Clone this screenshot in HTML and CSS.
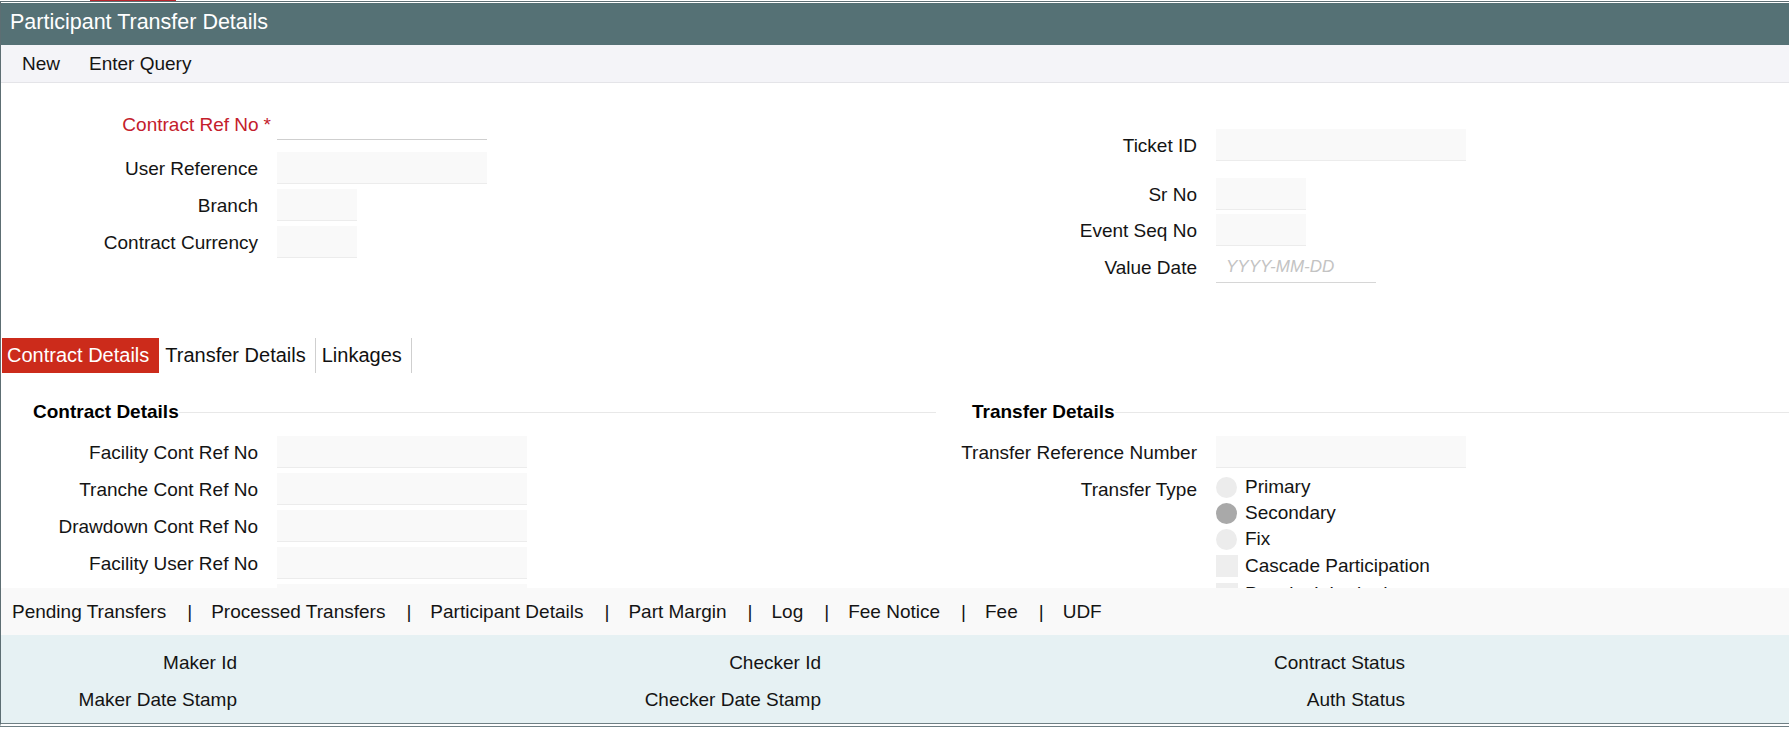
FILE: index.html
```html
<!DOCTYPE html>
<html lang="en">
<head>
<meta charset="utf-8">
<title>Participant Transfer Details</title>
<link rel="stylesheet" href="styles.css">
</head>
<body>
<div class="topmark"><span class="topmark-bar"></span></div>
<div class="window">
  <div class="titlebar">Participant Transfer Details</div>
  <div class="toolbar">
    <span class="tool">New</span>
    <span class="tool">Enter Query</span>
  </div>

  <div class="form-top">
    <div class="col col-left">
      <div class="row"><label class="lbl lbl-req">Contract Ref No<span class="star">*</span></label><span class="inp inp-line w210"></span></div>
      <div class="row mt12"><label class="lbl">User Reference</label><span class="inp w210"></span></div>
      <div class="row mt5"><label class="lbl">Branch</label><span class="inp w80"></span></div>
      <div class="row mt5"><label class="lbl">Contract Currency</label><span class="inp w80"></span></div>
    </div>
    <div class="col col-right">
      <div class="row"><label class="lbl">Ticket ID</label><span class="inp w250"></span></div>
      <div class="row mt17"><label class="lbl">Sr No</label><span class="inp w90"></span></div>
      <div class="row mt4"><label class="lbl">Event Seq No</label><span class="inp w90"></span></div>
      <div class="row mt5"><label class="lbl">Value Date</label><span class="inp inp-date w160">YYYY-MM-DD</span></div>
    </div>
  </div>

  <div class="tabs">
    <span class="tab tab-active">Contract Details</span>
    <span class="tab">Transfer Details</span>
    <span class="tab">Linkages</span>
  </div>

  <div class="tab-body">
    <div class="fs fs-left">
      <div class="legend"><span class="legend-text">Contract Details</span></div>
      <div class="row mt5"><label class="lbl">Facility Cont Ref No</label><span class="inp w250"></span></div>
      <div class="row mt5"><label class="lbl">Tranche Cont Ref No</label><span class="inp w250"></span></div>
      <div class="row mt5"><label class="lbl">Drawdown Cont Ref No</label><span class="inp w250"></span></div>
      <div class="row mt5"><label class="lbl">Facility User Ref No</label><span class="inp w250"></span></div>
      <div class="row mt5"><span class="lbl"></span><span class="inp w250"></span></div>
    </div>
    <div class="fs fs-right">
      <div class="legend"><span class="legend-text">Transfer Details</span></div>
      <div class="row mt5"><label class="lbl">Transfer Reference Number</label><span class="inp w250"></span></div>
      <div class="row row-top mt5">
        <label class="lbl lbl-tall">Transfer Type</label>
        <div class="options">
          <div class="opt"><span class="radio"></span>Primary</div>
          <div class="opt"><span class="radio radio-on"></span>Secondary</div>
          <div class="opt"><span class="radio"></span>Fix</div>
          <div class="chk-opt"><span class="check"></span>Cascade Participation</div>
          <div class="chk-opt"><span class="check"></span>Penalty Inherited</div>
        </div>
      </div>
    </div>
  </div>

  <div class="navbar">
    <span class="nav-item">Pending Transfers</span><span class="nav-sep">|</span>
    <span class="nav-item">Processed Transfers</span><span class="nav-sep">|</span>
    <span class="nav-item">Participant Details</span><span class="nav-sep">|</span>
    <span class="nav-item">Part Margin</span><span class="nav-sep">|</span>
    <span class="nav-item">Log</span><span class="nav-sep">|</span>
    <span class="nav-item">Fee Notice</span><span class="nav-sep">|</span>
    <span class="nav-item">Fee</span><span class="nav-sep">|</span>
    <span class="nav-item">UDF</span>
  </div>

  <div class="audit">
    <div class="audit-cell"><span class="audit-lbl">Maker Id</span></div>
    <div class="audit-cell"><span class="audit-lbl">Checker Id</span></div>
    <div class="audit-cell"><span class="audit-lbl">Contract Status</span></div>
    <div class="audit-cell"><span class="audit-lbl">Maker Date Stamp</span></div>
    <div class="audit-cell"><span class="audit-lbl">Checker Date Stamp</span></div>
    <div class="audit-cell"><span class="audit-lbl">Auth Status</span></div>
  </div>
</div>
</body>
</html>
```

FILE: styles.css
```css
html, body {
  margin: 0;
  padding: 0;
  background: #ffffff;
}

body {
  width: 1789px;
  height: 729px;
  overflow: hidden;
  font-family: "Liberation Sans", Arial, sans-serif;
  font-size: 19px;
  color: #141414;
}

.topmark {
  height: 1px;
}

.topmark-bar {
  display: block;
  margin-left: 90px;
  width: 86px;
  height: 1px;
  background: #b8262c;
}

.window {
  border-top: 1px solid #5d6e73;
  border-left: 1px solid #5d6e73;
  border-bottom: 4px double #6f7f84;
  padding-top: 1px;
}

.titlebar {
  height: 42px;
  box-sizing: border-box;
  padding: 0 0 4px 9px;
  display: flex;
  align-items: center;
  background: #557175;
  color: #ffffff;
  font-size: 21.5px;
}

.toolbar {
  height: 38px;
  box-sizing: border-box;
  display: flex;
  align-items: center;
  gap: 29px;
  padding-left: 21px;
  background: #f4f4f8;
  border-bottom: 1px solid #e4e4e8;
}

/* Top form */
.form-top {
  display: grid;
  grid-template-columns: 939px 1fr;
  align-items: start;
  padding-bottom: 55px;
}

.col-left {
  padding-top: 25px;
}

.col-right {
  padding-top: 46px;
}

.row {
  display: flex;
  align-items: center;
  height: 32px;
}

.mt4 { margin-top: 4px; }
.mt5 { margin-top: 5px; }
.mt12 { margin-top: 12px; }
.mt17 { margin-top: 17px; }

.lbl {
  width: 257px;
  flex: none;
  text-align: right;
  margin-right: 19px;
  padding-top: 2px;
  white-space: nowrap;
}

.lbl-req {
  color: #c4202b;
}

.star {
  color: #c4202b;
  margin-left: 5px;
  margin-right: -13px;
}

.inp {
  display: block;
  height: 32px;
  box-sizing: border-box;
  background: #f9f9f9;
  border-bottom: 1px solid #ececec;
  flex: none;
}

.inp-line {
  background: #ffffff;
  border-bottom: 1px solid #cfcfcf;
}

.inp-date {
  background: #ffffff;
  border-bottom: 1px solid #d6d6d6;
  color: #c3c3c3;
  font-style: italic;
  font-size: 17px;
  line-height: 32px;
  padding-left: 10px;
}

.w80 { width: 80px; }
.w90 { width: 90px; }
.w160 { width: 160px; }
.w210 { width: 210px; }
.w250 { width: 250px; }

/* Tabs */
.tabs {
  display: flex;
  height: 35px;
  padding-left: 1px;
}

.tab {
  display: flex;
  align-items: center;
  padding: 0 9px 0 6px;
  font-size: 20px;
  border-right: 1px solid #cfcfcf;
  color: #111111;
}

.tab-active {
  background: #cc2b1b;
  color: #ffffff;
  padding-left: 5px;
  border-right-color: #cc2b1b;
}

/* Tab body */
.tab-body {
  height: 215px;
  overflow: hidden;
  box-sizing: border-box;
  padding-top: 27px;
  display: grid;
  grid-template-columns: 939px 1fr;
  align-items: start;
}

.legend {
  display: flex;
  align-items: center;
  height: 24px;
  padding-left: 32px;
  margin-bottom: 12px;
  font-weight: bold;
  color: #000000;
}

.legend::after {
  content: "";
  flex: 1;
  height: 1px;
  background: #e8e8e8;
}

.fs-left .legend {
  margin-right: 4px;
}

.row-top {
  height: auto;
  align-items: flex-start;
}

.lbl-tall {
  line-height: 32px;
  padding-top: 1px;
}

.options {
  padding-top: 1px;
}

.opt {
  display: flex;
  align-items: center;
  height: 26px;
}

.radio {
  width: 21px;
  height: 21px;
  border-radius: 50%;
  background: #ececec;
  margin-right: 8px;
  flex: none;
}

.radio-on {
  background: #a9a9a9;
}

.chk-opt {
  display: flex;
  align-items: center;
  height: 28px;
}

.check {
  width: 22px;
  height: 22px;
  background: #eeeeee;
  margin-right: 7px;
  flex: none;
}

/* Bottom nav */
.navbar {
  height: 47px;
  display: flex;
  align-items: center;
  padding-left: 11px;
  background: #f9f9f9;
}

.nav-sep {
  margin: 0 19px 0 21px;
}

/* Audit */
.audit {
  display: grid;
  grid-template-columns: 584px 584px 1fr;
  grid-auto-rows: 37px;
  padding: 9px 0 5px;
  background: #e6f1f3;
}

.audit-cell {
  display: flex;
  align-items: center;
}

.audit-lbl {
  width: 236px;
  text-align: right;
  white-space: nowrap;
}
```
